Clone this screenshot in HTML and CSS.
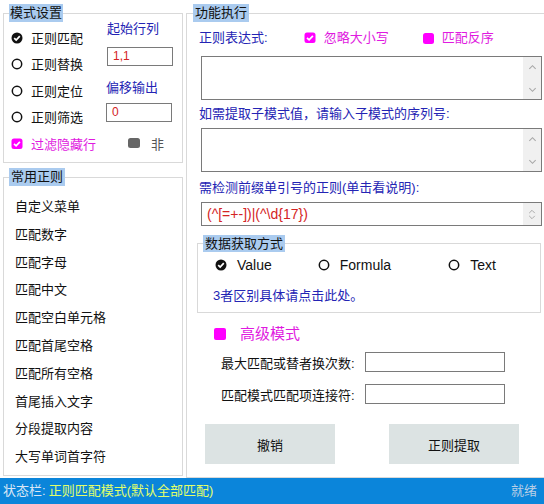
FILE: index.html
```html
<!DOCTYPE html>
<html lang="zh-CN">
<head>
<meta charset="utf-8">
<title>正则</title>
<link rel="stylesheet" href="styles.css">
</head>
<body>
<div class="app">
  <div class="main">
    <div class="leftcol">
      <fieldset class="box mode">
        <legend>模式设置</legend>
        <div class="mode-body">
          <div class="opts">
            <div class="opt"><svg class="ic" viewBox="0 0 12 12"><circle cx="6" cy="6" r="5.5" fill="#111"/><path d="M3.2 6.1 5.2 8.1 8.8 4.1" fill="none" stroke="#fff" stroke-width="1.7"/></svg>正则匹配</div>
            <div class="opt"><svg class="ic" viewBox="0 0 12 12"><circle cx="6" cy="6" r="4.7" fill="none" stroke="#111" stroke-width="1.5"/></svg>正则替换</div>
            <div class="opt"><svg class="ic" viewBox="0 0 12 12"><circle cx="6" cy="6" r="4.7" fill="none" stroke="#111" stroke-width="1.5"/></svg>正则定位</div>
            <div class="opt"><svg class="ic" viewBox="0 0 12 12"><circle cx="6" cy="6" r="4.7" fill="none" stroke="#111" stroke-width="1.5"/></svg>正则筛选</div>
          </div>
          <div class="side">
            <div class="blue lbl">起始行列</div>
            <div class="inp red v1">1,1</div>
            <div class="blue lbl l2">偏移输出</div>
            <div class="inp red v2">0</div>
          </div>
          <div class="opt last pink"><svg class="ic" viewBox="0 0 12 12"><rect x="0.5" y="0.5" width="11" height="10.5" rx="2.5" fill="#ff00ff"/><path d="M3 5.8 5.1 7.9 8.9 3.9" fill="none" stroke="#fff" stroke-width="1.7"/></svg>过滤隐藏行<span class="gsq"></span><span class="non">非</span></div>
        </div>
      </fieldset>
      <fieldset class="box common">
        <legend>常用正则</legend>
        <ul class="list">
          <li>自定义菜单</li>
          <li>匹配数字</li>
          <li>匹配字母</li>
          <li>匹配中文</li>
          <li>匹配空白单元格</li>
          <li>匹配首尾空格</li>
          <li>匹配所有空格</li>
          <li>首尾插入文字</li>
          <li>分段提取内容</li>
          <li>大写单词首字符</li>
        </ul>
      </fieldset>
    </div>
    <fieldset class="box func">
      <legend>功能执行</legend>
      <div class="row r1">
        <span class="blue t1">正则表达式:</span>
        <span class="pink ck"><svg class="ic" viewBox="0 0 12 12"><rect x="0.5" y="0.5" width="11" height="10.5" rx="2.5" fill="#ff00ff"/><path d="M3 5.8 5.1 7.9 8.9 3.9" fill="none" stroke="#fff" stroke-width="1.7"/></svg>忽略大小写</span>
        <span class="pink ck ck2"><span class="msq"></span>匹配反序</span>
      </div>
      <div class="ta"><div class="sb"><svg viewBox="0 0 10 6"><path d="M1.5 5 5 1.5 8.5 5" fill="none" stroke="#a8a8a8" stroke-width="1.2"/></svg><svg viewBox="0 0 10 6"><path d="M1.5 1 5 4.5 8.5 1" fill="none" stroke="#a8a8a8" stroke-width="1.2"/></svg></div></div>
      <div class="blue lbl2">如需提取子模式值，请输入子模式的序列号:</div>
      <div class="ta"><div class="sb"><svg viewBox="0 0 10 6"><path d="M1.5 5 5 1.5 8.5 5" fill="none" stroke="#a8a8a8" stroke-width="1.2"/></svg><svg viewBox="0 0 10 6"><path d="M1.5 1 5 4.5 8.5 1" fill="none" stroke="#a8a8a8" stroke-width="1.2"/></svg></div></div>
      <div class="blue lbl3">需检测前缀单引号的正则(单击看说明):</div>
      <div class="ta small"><span class="red rx">(^[=+-])|(^\d{17})</span><div class="sb"><svg viewBox="0 0 10 6"><path d="M1.5 5 5 1.5 8.5 5" fill="none" stroke="#a8a8a8" stroke-width="1.2"/></svg><svg viewBox="0 0 10 6"><path d="M1.5 1 5 4.5 8.5 1" fill="none" stroke="#a8a8a8" stroke-width="1.2"/></svg></div></div>
      <fieldset class="box data">
        <legend>数据获取方式</legend>
        <div class="radios">
          <span class="rd"><svg class="ic" viewBox="0 0 12 12"><circle cx="6" cy="6" r="5.5" fill="#111"/><path d="M3.2 6.1 5.2 8.1 8.8 4.1" fill="none" stroke="#fff" stroke-width="1.7"/></svg>Value</span>
          <span class="rd rf"><svg class="ic" viewBox="0 0 12 12"><circle cx="6" cy="6" r="4.7" fill="none" stroke="#111" stroke-width="1.5"/></svg>Formula</span>
          <span class="rd rt"><svg class="ic" viewBox="0 0 12 12"><circle cx="6" cy="6" r="4.7" fill="none" stroke="#111" stroke-width="1.5"/></svg>Text</span>
        </div>
        <div class="blue note">3者区别具体请点击此处。</div>
      </fieldset>
      <div class="adv pink"><span class="msq big"></span>高级模式</div>
      <div class="frow f1"><span class="flab">最大匹配或替者换次数:</span><span class="finp"></span></div>
      <div class="frow f2"><span class="flab">匹配模式匹配项连接符:</span><span class="finp"></span></div>
      <div class="btns"><div class="btn">撤销</div><div class="btn">正则提取</div></div>
    </fieldset>
  </div>
  <div class="status"><span class="st1">状态栏:</span><span class="st2">正则匹配模式(默认全部匹配)</span><span class="st3">就绪</span></div>
</div>
</body>
</html>
```
FILE: styles.css
```css
* { box-sizing: border-box; }
html, body { margin: 0; padding: 0; background: #fff; }
body {
  font-family: "Liberation Sans", "Noto Sans CJK SC", sans-serif;
  font-size: 13px;
  color: #111;
  width: 544px;
  height: 504px;
  overflow: hidden;
}
.app { width: 544px; height: 504px; display: flex; flex-direction: column; }
.main { height: 478px; display: flex; padding-top: 4px; overflow: hidden; }
.leftcol { width: 183px; padding-left: 3px; display: flex; flex-direction: column; }

.box {
  margin: 0;
  padding: 0;
  border: 1px solid #d9d9d9;
  min-width: 0;
}
.box > legend {
  padding: 0 2px;
  margin-left: 5px;
  background: #aacbef;
  line-height: 18px;
  height: 18px;
  color: #111;
}
.mode > legend { padding: 0 1px; }

.blue { color: #2424b4; }
.pink { color: #e01ae0; }
.red { color: #d42424; }

.ic { width: 12px; height: 12px; flex: none; display: block; }

/* mode box */
.mode { width: 180px; }
.mode-body {
  display: grid;
  grid-template-columns: 95px 1fr;
  padding: 0 0 6px 7px;
}
.opts { padding-top: 2px; }
.opt { height: 26.5px; display: flex; align-items: center; gap: 8px; }
.opt .ic { margin-top: 1px; }
.last { grid-column: 1 / 3; height: 26px; }
.gsq {
  width: 12px; height: 10px; border-radius: 2.5px; background: #666;
  margin-left: 24px;
}
.non { color: #555; margin-left: 3px; }
.side { display: flex; flex-direction: column; padding-top: 0; }
.lbl { line-height: 16px; margin-left: 1px; margin-top: -1px; }
.l2 { margin-top: 14px; margin-left: 0; }
.inp {
  height: 19px;
  width: 66px;
  border: 1px solid #7a7a7a;
  line-height: 17px;
  padding-left: 5px;
  font-size: 12px;
}
.v1 { margin-top: 10px; margin-left: 1px; }
.v2 { margin-top: 7px; }

/* common box */
.common { width: 180px; margin-top: 5px; }
.list { list-style: none; margin: 0; padding: 7px 0 4px 11px; }
.list li { height: 27.8px; line-height: 27.8px; }

/* func box */
.func {
  flex: 1;
  margin-left: 3px;
  border-right: none;
  padding: 0 0 10px 0;
  display: flex;
  flex-direction: column;
}
.func > legend { margin-left: 6px; }
.row { display: flex; align-items: center; line-height: 16px; }
.r1 { margin-top: 8px; padding-left: 12px; }
.ck { display: flex; align-items: center; gap: 8px; margin-left: 36px; }
.ck2 { margin-left: 34px; }
.msq { width: 11px; height: 11px; border-radius: 2.5px; background: #ff00ff; display: block; }
.ta {
  margin-top: 10px;
  margin-left: 14px;
  width: 341px;
  height: 44px;
  border: 1px solid #7a7a7a;
  display: flex;
  justify-content: flex-end;
  align-items: stretch;
}
.sb {
  width: 18px;
  background: #f0f0f0;
  display: flex;
  flex-direction: column;
  justify-content: space-between;
  align-items: center;
  padding: 7px 0 6px;
}
.sb svg { width: 9px; height: 6px; display: block; }
.lbl2 { margin-top: 6px; margin-left: 12px; line-height: 16px; }
.lbl2 + .ta { margin-top: 6px; }
.lbl3 { margin-top: 8px; margin-left: 12px; line-height: 16px; }
.ta.small { margin-top: 6px; height: 24px; justify-content: space-between; }
.ta.small .sb { padding: 3px 0 2px; justify-content: center; gap: 1px; }
.ta.small .sb svg { width: 8px; height: 5px; }
.rx { line-height: 22px; padding-left: 5px; font-size: 14px; }

.data {
  margin: 9px 0 0 10px;
  width: 344px;
  padding: 0 0 8px 0;
}
.data > legend { line-height: 17px; height: 17px; margin-left: 5px; }
.radios { display: flex; align-items: center; margin-top: 5px; padding-left: 17px; line-height: 16px; font-size: 14px; }
.rd { display: flex; align-items: center; gap: 10px; }
.rf { margin-left: 46px; }
.rt { margin-left: 57px; }
.note { margin-top: 15px; margin-left: 15px; line-height: 16px; }

.adv {
  margin-top: 11px;
  margin-left: 27px;
  display: flex;
  align-items: center;
  gap: 14px;
  font-size: 15px;
  line-height: 20px;
}
.msq.big { width: 12px; height: 12px; border-radius: 2px; }
.frow { display: flex; align-items: center; margin-left: 34px; height: 20px; }
.f1 { margin-top: 8px; }
.f2 { margin-top: 12px; }
.flab { width: 144px; }
.finp { width: 140px; height: 20px; border: 1px solid #7a7a7a; display: block; }
.btns { display: flex; margin-top: 20px; margin-left: 18px; gap: 54px; }
.btn {
  width: 130px;
  height: 40px;
  background: #dce3e3;
  display: flex;
  align-items: center;
  justify-content: center;
}

.status {
  height: 26px;
  background: #0b85da;
  display: flex;
  align-items: center;
  padding: 0 7px 0 3px;
  line-height: 26px;
}
.st1 { color: #dbe7f5; }
.st2 { color: #e2ff6a; margin-left: 3px; }
.st3 { margin-left: auto; color: #b9cfe6; }
```
